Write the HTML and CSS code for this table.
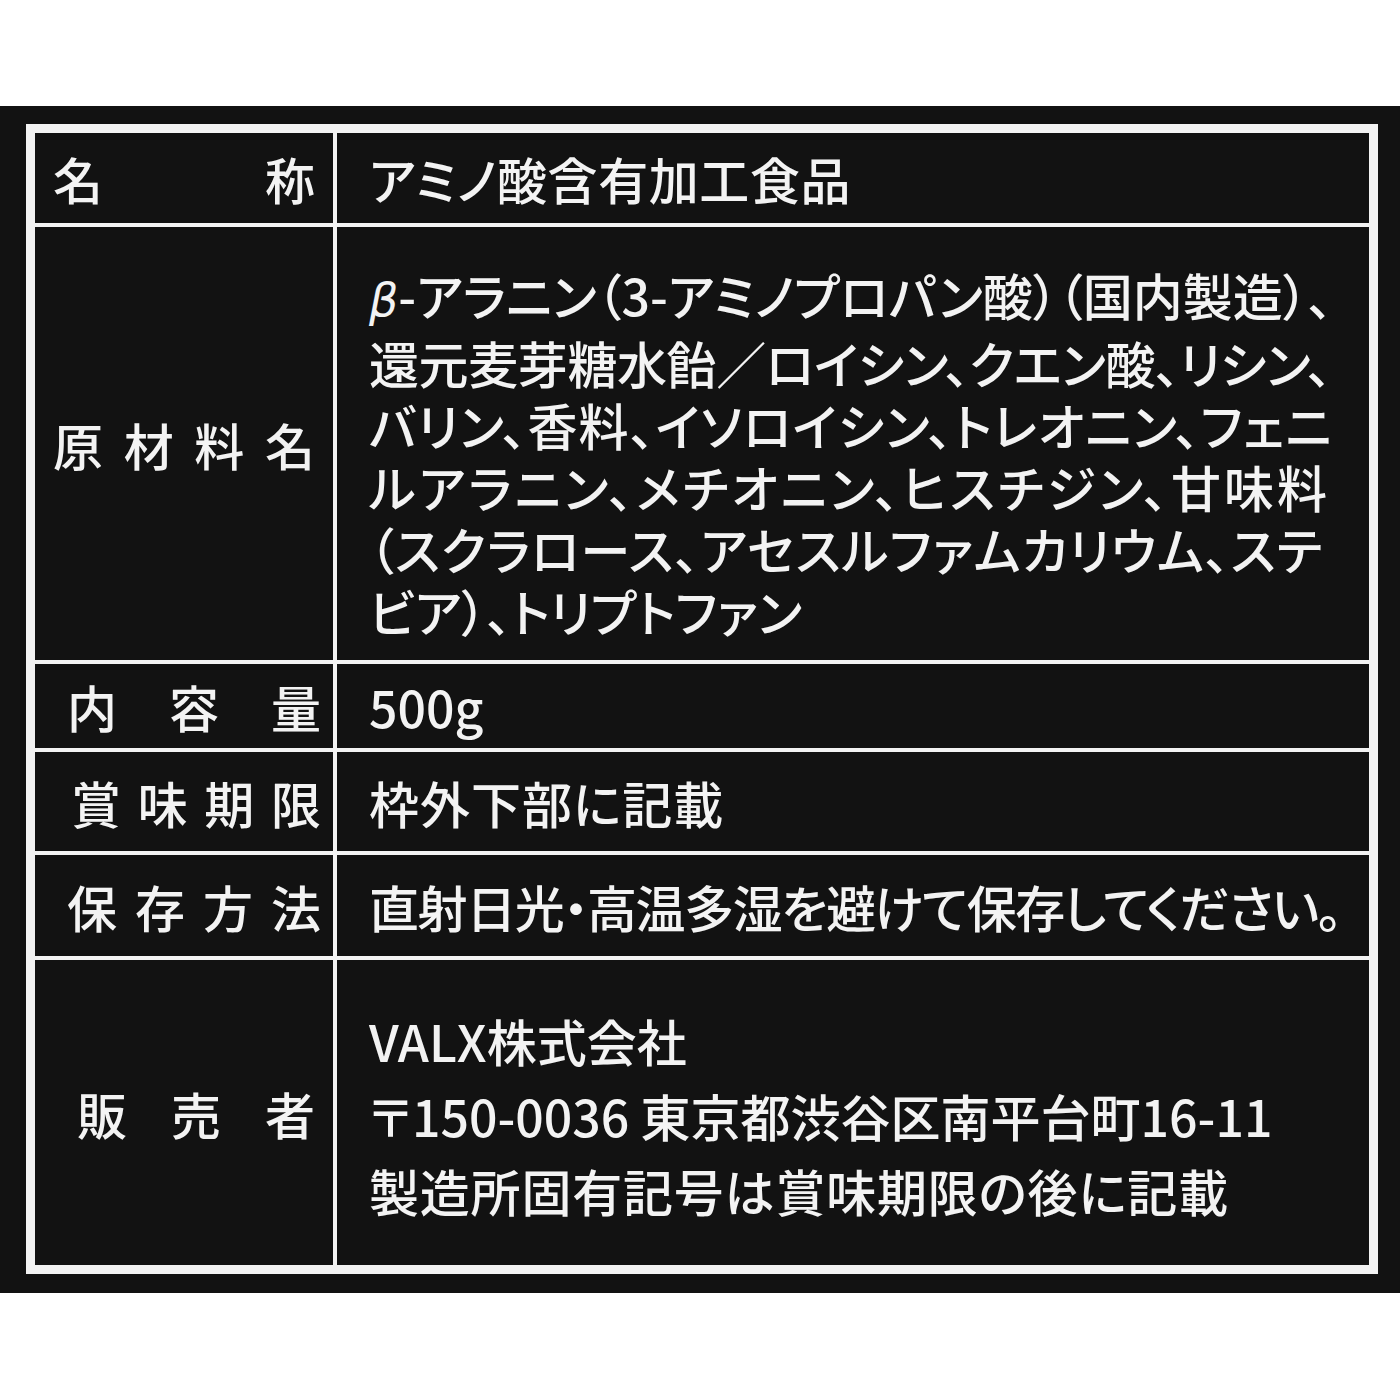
FILE: index.html
```html
<!DOCTYPE html>
<html lang="ja">
<head>
<meta charset="utf-8">
<title>原材料表示</title>
<link rel="stylesheet" href="styles.css">
</head>
<body>
<div class="page">
  <div class="sheet">
    <div class="panel">
      <div class="row row-name">
        <div class="label"><span>名</span><span>称</span></div>
        <div class="value">アミノ酸含有加工食品</div>
      </div>
      <div class="row row-ingredients">
        <div class="label"><span>原</span><span>材</span><span>料</span><span>名</span></div>
        <div class="value value-lines">
          <span class="line"><span class="beta">β</span>-アラニン（3-アミノプロパン酸）（国内製造）、</span>
          <span class="line line-tight">還元麦芽糖水飴／ロイシン、クエン酸、リシン、</span>
          <span class="line line-loose">バリン、香料、イソロイシン、トレオニン、フェニ</span>
          <span class="line line-wide">ルアラニン、メチオニン、ヒスチジン、甘味料</span>
          <span class="line line-loose">（スクラロース、アセスルファムカリウム、ステ</span>
          <span class="line">ビア）、トリプトファン</span>
        </div>
      </div>
      <div class="row row-volume">
        <div class="label"><span>内</span><span>容</span><span>量</span></div>
        <div class="value">500g</div>
      </div>
      <div class="row row-expiry">
        <div class="label"><span>賞</span><span>味</span><span>期</span><span>限</span></div>
        <div class="value">枠外下部に記載</div>
      </div>
      <div class="row row-storage">
        <div class="label"><span>保</span><span>存</span><span>方</span><span>法</span></div>
        <div class="value value-storage">直射日光・高温多湿を避けて保存してください。</div>
      </div>
      <div class="row row-seller">
        <div class="label"><span>販</span><span>売</span><span>者</span></div>
        <div class="value value-seller">
          <span class="line">VALX株式会社</span>
          <span class="line">〒150-0036 東京都渋谷区南平台町16-11</span>
          <span class="line line-wide-sm">製造所固有記号は賞味期限の後に記載</span>
        </div>
      </div>
    </div>
  </div>
</div>
</body>
</html>
```

FILE: styles.css
```css
* {
  box-sizing: border-box;
}

html, body {
  margin: 0;
  padding: 0;
  background: #ffffff;
}

body {
  font-family: "Noto Sans CJK JP", "Noto Sans", sans-serif;
  font-weight: 500;
  color: #f3f3f3;
}

.page {
  padding-top: 106px;
}

.sheet {
  background: #121212;
  padding: 18px 22px 19px 26px;
}

.panel {
  border: 9px solid #f3f3f3;
  display: flex;
  flex-direction: column;
}

.row {
  display: flex;
  border-top: 4px solid #f3f3f3;
}

.row:first-child {
  border-top: none;
}

.label {
  width: 302px;
  flex: none;
  border-right: 4px solid #f3f3f3;
  display: flex;
  justify-content: space-between;
  align-items: center;
  font-size: 50px;
  line-height: 1;
  padding: 0 18px 0 32px;
}

.value {
  flex: 1;
  display: flex;
  align-items: center;
  padding-left: 32px;
  font-size: 50px;
  line-height: 1;
  font-feature-settings: "palt";
  white-space: nowrap;
}

.value-lines,
.value-seller {
  flex-direction: column;
  align-items: flex-start;
}

.line {
  display: block;
}

.line-tight {
  letter-spacing: -0.4px;
}

.line-loose {
  letter-spacing: 1px;
}

.line-wide {
  letter-spacing: 3px;
}

.line-wide-sm {
  letter-spacing: 0.8px;
}

.beta {
  font-family: "DejaVu Sans", sans-serif;
  font-style: italic;
  font-size: 46px;
}

.row-name {
  height: 90px;
}

.row-name .value {
  letter-spacing: 0.6px;
}

.row-name .label,
.row-ingredients .label {
  padding-left: 18px;
}

.row-ingredients {
  height: 437px;
}

.value-lines {
  justify-content: flex-start;
  padding-top: 36px;
  line-height: 62px;
}

.row-volume {
  height: 88px;
}

.row-volume .label {
  padding-right: 12px;
}

.row-expiry {
  height: 103px;
}

.row-expiry .value {
  letter-spacing: 1px;
}

.row-expiry .label {
  padding-left: 36px;
  padding-right: 12px;
}

.row-storage {
  height: 105px;
}

.value-storage {
  letter-spacing: -1.4px;
}

.row-storage .label {
  padding-right: 12px;
}

.row-seller {
  height: 309px;
}

.row-seller .label {
  padding-left: 42px;
  padding-right: 18px;
}

.value-seller {
  justify-content: center;
  line-height: 75px;
  padding-top: 6px;
}
```
